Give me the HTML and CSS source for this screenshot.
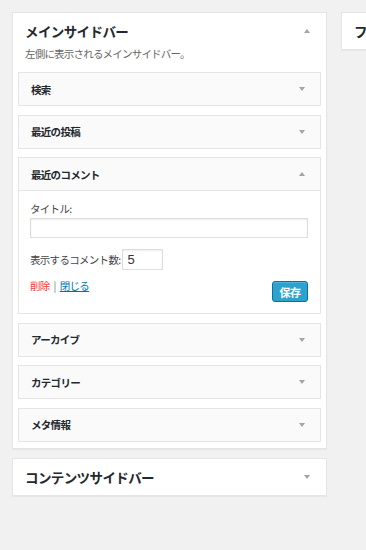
FILE: index.html
```html
<!DOCTYPE html>
<html lang="ja">
<head>
    <meta charset="UTF-8">
    <meta name="viewport" content="width=device-width, initial-scale=1.0">
    <title>ウィジェット</title>
    <link rel="stylesheet" href="styles.css">
</head>
<body>
    <div class="columns">
        <div class="column">
            <div class="sidebar">
                <div class="sidebar-head">
                    <h2>メインサイドバー</h2>
                    <span class="arrow up"></span>
                </div>
                <p class="sidebar-desc">左側に表示されるメインサイドバー。</p>
                <div class="widget">
                    <div class="widget-top"><h3>検索</h3><span class="arrow down"></span></div>
                </div>
                <div class="widget">
                    <div class="widget-top"><h3>最近の投稿</h3><span class="arrow down"></span></div>
                </div>
                <div class="widget open">
                    <div class="widget-top"><h3>最近のコメント</h3><span class="arrow up"></span></div>
                    <div class="widget-inside">
                        <label class="field-label" for="title">タイトル:</label>
                        <input type="text" id="title" class="wide">
                        <div class="count-row">
                            <label for="number">表示するコメント数:</label>
                            <input type="text" id="number" class="tiny" value="5">
                        </div>
                        <div class="control-row">
                            <div class="links">
                                <a href="#" class="delete">削除</a><span class="sep">|</span><a href="#" class="close">閉じる</a>
                            </div>
                            <button type="button" class="save">保存</button>
                        </div>
                    </div>
                </div>
                <div class="widget">
                    <div class="widget-top"><h3>アーカイブ</h3><span class="arrow down"></span></div>
                </div>
                <div class="widget">
                    <div class="widget-top"><h3>カテゴリー</h3><span class="arrow down"></span></div>
                </div>
                <div class="widget">
                    <div class="widget-top"><h3>メタ情報</h3><span class="arrow down"></span></div>
                </div>
            </div>
            <div class="sidebar closed">
                <div class="sidebar-head">
                    <h2>コンテンツサイドバー</h2>
                    <span class="arrow down"></span>
                </div>
            </div>
        </div>
        <div class="column">
            <div class="sidebar closed">
                <div class="sidebar-head">
                    <h2>フッター</h2>
                </div>
            </div>
        </div>
    </div>
</body>
</html>
```

FILE: styles.css
```css
body {
    margin: 0;
    background-color: #f1f1f1;
    font-family: "Noto Sans CJK JP", "Noto Sans", sans-serif;
    color: #444;
    overflow: hidden;
}
.columns {
    display: flex;
    gap: 14px;
    padding: 12px;
    width: 700px;
}
.column {
    width: 315px;
    flex: none;
    display: flex;
    flex-direction: column;
    gap: 9px;
}
.sidebar {
    background-color: white;
    border: 1px solid #e5e5e5;
    box-shadow: 0 1px 1px rgba(0,0,0,0.04);
    padding: 0 5px 6px;
}
.sidebar.closed {
    padding-bottom: 0;
}
.sidebar-head {
    display: flex;
    align-items: center;
    justify-content: space-between;
    height: 35px;
    padding: 0 11px 0 7px;
}
.closed .sidebar-head {
    height: 36px;
}
.sidebar-head h2 {
    margin: 0;
    font-size: 13.5px;
    letter-spacing: -0.6px;
    font-weight: bold;
    color: #23282d;
}
.sidebar-desc {
    margin: -2px 0 10px 7px;
    font-size: 10.5px;
    letter-spacing: -0.8px;
    line-height: 16px;
    color: #666;
}
.arrow {
    width: 0;
    height: 0;
    border-left: 3px solid transparent;
    border-right: 3px solid transparent;
}
.arrow.down {
    border-top: 4px solid #a0a5aa;
}
.arrow.up {
    border-bottom: 4px solid #a0a5aa;
}
.widget {
    background-color: #fafafa;
    border: 1px solid #e5e5e5;
    margin-bottom: 8.5px;
}
.widget:last-child {
    margin-bottom: 0;
}
.widget-top {
    display: flex;
    align-items: center;
    justify-content: space-between;
    height: 32px;
    padding: 0 15px 0 12px;
}
.widget-top h3 {
    margin: 0;
    font-size: 10.5px;
    letter-spacing: -0.7px;
    font-weight: bold;
    color: #23282d;
}
.widget.open .widget-top {
    border-bottom: 1px solid #e5e5e5;
}
.widget-inside {
    background-color: white;
    padding: 9px 12px 11px 11px;
    font-size: 10.5px;
    letter-spacing: -0.7px;
    color: #444;
}
.field-label {
    display: block;
    line-height: 18px;
}
input[type="text"] {
    border: 1px solid #ddd;
    box-shadow: inset 0 1px 2px rgba(0,0,0,0.07);
    font-family: "Liberation Sans", sans-serif;
    font-size: 13px;
    letter-spacing: 0;
    color: #333;
    box-sizing: border-box;
    margin: 0;
}
.wide {
    width: 100%;
    height: 20px;
    display: block;
}
.count-row {
    display: flex;
    align-items: center;
    gap: 2px;
    margin-top: 11px;
}
.tiny {
    width: 41px;
    height: 21px;
    padding: 0 4px;
}
.control-row {
    display: flex;
    justify-content: space-between;
    align-items: flex-start;
    margin-top: 7px;
}
.links {
    line-height: 18px;
    color: #777;
}
.sep {
    margin: 0 4px;
}
.delete {
    color: #f33;
    text-decoration: none;
}
.close {
    color: #0073aa;
}
.save {
    margin-top: 4px;
    background-color: #2ea2cc;
    border: 1px solid #0074a2;
    box-shadow: inset 0 1px 0 rgba(120,200,230,0.5);
    color: white;
    font-family: inherit;
    font-size: 11px;
    letter-spacing: -0.5px;
    font-weight: bold;
    width: 36px;
    height: 21px;
    padding: 0;
    border-radius: 3px;
}
```
